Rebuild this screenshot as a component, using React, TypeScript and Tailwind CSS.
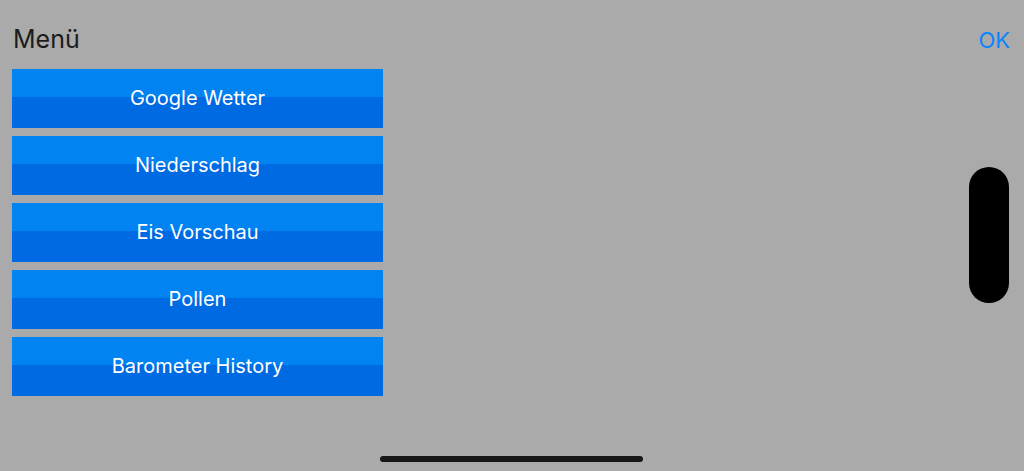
import React from "react";

const items = ["Google Wetter", "Niederschlag", "Eis Vorschau", "Pollen", "Barometer History"];

export default function App() {
  return (
    <div
      className="relative w-[1024px] h-[471px] overflow-hidden bg-[#aaaaaa]"
      style={{ fontFamily: "Inter, 'Noto Sans', sans-serif" }}
    >
      <div className="flex items-baseline justify-between pt-[24px] pl-[13px] pr-[14px]">
        <span className="text-[25px] leading-[30px] text-[#1c1c1c]">Menü</span>
        <span className="text-[22px] leading-[30px] text-[#0a84ff]">OK</span>
      </div>
      <div className="mt-[14px] ml-[12px] flex w-[371px] flex-col gap-[8px]">
        {items.map((t) => (
          <button
            key={t}
            className="relative flex h-[59px] items-center justify-center bg-[linear-gradient(to_bottom,#0183f2_0%,#0183f2_47%,#006ae2_47%,#006ae2_100%)] pb-[1px] text-[20px] text-white"
          >
            {t}
          </button>
        ))}
      </div>
      <div className="absolute left-[969px] top-[167px] h-[136px] w-[40px] rounded-[20px] bg-black" />
      <div className="absolute left-[380px] top-[456px] h-[6px] w-[263px] rounded-full bg-[#161616]" />
    </div>
  );
}
